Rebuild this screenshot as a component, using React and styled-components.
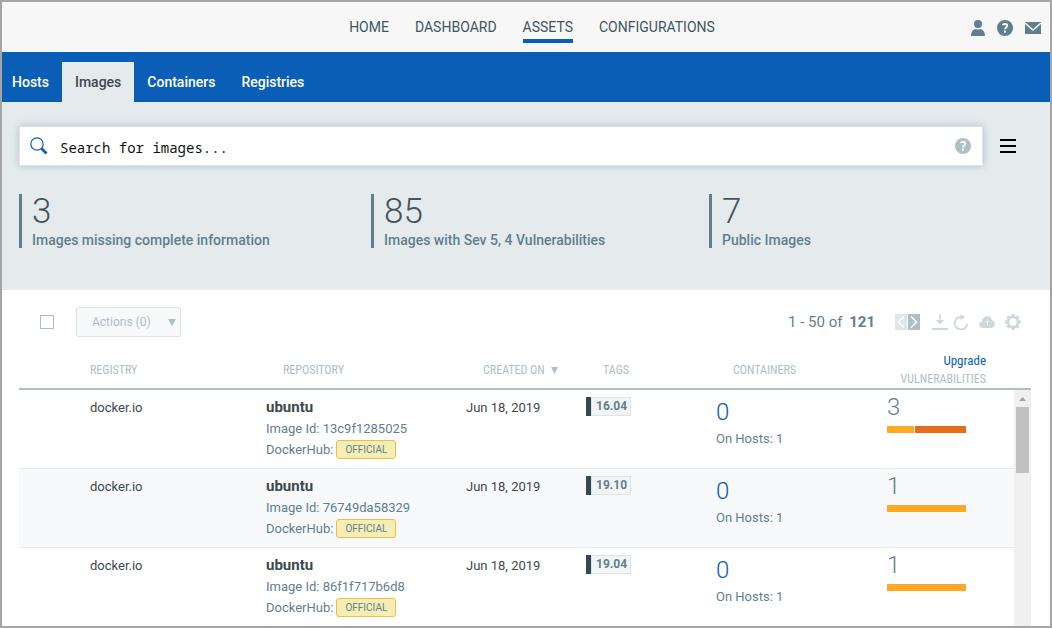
import React, { useState } from "react";
import styled, { createGlobalStyle } from "styled-components";

const GlobalStyle = createGlobalStyle`
  * {
    box-sizing: border-box;
  }
  body {
    margin: 0;
    background: #fff;
    color: #3d484d;
    font-family: Roboto, "Liberation Sans", sans-serif;
    font-size: 13px;
  }
  button {
    font-family: inherit;
    cursor: pointer;
  }
  a {
    text-decoration: none;
  }
`;

const Frame = styled.div`
  display: flex;
  flex-direction: column;
  height: 100vh;
  border: 2px solid #a5a5a5;
  overflow: hidden;
`;

const TopBar = styled.header`
  display: grid;
  grid-template-columns: 1fr auto 1fr;
  flex: none;
  height: 50px;
  padding: 0 9px 0 21px;
  background: #f7f7f7;
`;

const MainNav = styled.nav`
  display: flex;
  grid-column: 2;
  gap: 26px;
  align-items: flex-start;
  padding-top: 17px;
`;

const NavLink = styled.a`
  padding-bottom: 4px;
  border-bottom: 4px solid ${props => (props.$active ? "#0a5eb5" : "transparent")};
  color: #3f5560;
  font-size: 14px;
  line-height: 16px;
`;

const UserTools = styled.div`
  display: flex;
  justify-self: end;
  align-items: center;
  gap: 12px;
  padding-top: 2px;
`;

const IconButton = styled.button`
  display: flex;
  padding: 0;
  border: none;
  background: none;
  color: ${props => props.$color || "#5f7f8f"};
`;

const TabBar = styled.nav`
  display: flex;
  flex: none;
  align-items: flex-end;
  height: 50px;
  background: #0a5eb5;
`;

const Tab = styled.a`
  padding: 0 13px;
  background: ${props => (props.$active ? "#e5ebed" : "transparent")};
  color: ${props => (props.$active ? "#3d484d" : "#fff")};
  font-size: 14px;
  font-weight: 500;
  line-height: 40px;
  &:first-child {
    padding-left: 10px;
  }
`;

const Summary = styled.section`
  flex: none;
  height: 188px;
  padding: 24px 19px 0 17px;
  background: #e5ebed;
`;

const SearchRow = styled.div`
  display: flex;
  align-items: center;
  gap: 17px;
  padding-right: 15px;
`;

const SearchBox = styled.label`
  display: flex;
  flex: 1;
  align-items: center;
  height: 40px;
  padding: 0 11px 0 10px;
  border: 1px solid #dbe4e8;
  background: #fff;
  box-shadow: 0 0 8px #b0bec5;
`;

const SearchInput = styled.input`
  flex: 1;
  min-width: 0;
  margin-left: 12px;
  padding: 4px 0 0;
  border: none;
  outline: none;
  font-family: "Noto Sans Mono", "DejaVu Sans Mono", monospace;
  font-size: 14px;
  line-height: 20px;
  &::placeholder {
    color: #111;
    opacity: 1;
  }
`;

const Stats = styled.div`
  display: grid;
  grid-template-columns: 352fr 338fr 322fr;
  margin-top: 28px;
`;

const Stat = styled.div`
  height: 54px;
  padding-left: 10px;
  border-left: 3px solid #5f7f8f;
`;

const StatValue = styled.div`
  color: #46555d;
  font-size: 35px;
  font-weight: 300;
  line-height: 36px;
`;

const StatLabel = styled.div`
  color: #5f7f8f;
  font-size: 14px;
  font-weight: 500;
  line-height: 20px;
`;

const Toolbar = styled.div`
  display: flex;
  flex: none;
  align-items: center;
  height: 62px;
  padding: 2px 29px 0 38px;
`;

const Checkbox = styled.input`
  appearance: none;
  width: 14px;
  height: 14px;
  margin: 0 22px 0 0;
  border: 1px solid #b0bec5;
  background: #fff;
  &:checked {
    background: #b0bec5;
  }
`;

const ActionsButton = styled.button`
  display: flex;
  align-items: center;
  justify-content: space-between;
  width: 105px;
  height: 30px;
  padding: 0 4px 0 15px;
  border: 1px solid #dde4e8;
  border-radius: 2px;
  background: #f7f9fb;
  color: #b0bec5;
  font-size: 12px;
`;

const Range = styled.div`
  margin-left: auto;
  color: #5f7f8f;
  font-size: 15px;
  b {
    margin-left: 3px;
  }
`;

const Pager = styled.div`
  display: flex;
  gap: 1px;
  margin: 0 12px 0 20px;
`;

const PageButton = styled.button`
  display: flex;
  width: 12px;
  height: 16px;
  padding: 0;
  border: none;
  background: ${props => (props.$dim ? "#dfe6ea" : "#b0bec5")};
`;

const TableTools = styled.div`
  display: flex;
  align-items: center;
  gap: 10px;
`;

const ToolPair = styled.div`
  display: flex;
  gap: 5px;
`;

const ListArea = styled.div`
  display: flex;
  flex: 1;
  min-height: 0;
  margin: 0 19px 0 17px;
  overflow: hidden;
`;

const TableWrap = styled.div`
  flex: 1;
  min-width: 0;
`;

const Table = styled.table`
  width: 100%;
  table-layout: fixed;
  border-collapse: separate;
  border-spacing: 0;
`;

const HeadCell = styled.th`
  height: 38px;
  padding: 0 0 0 ${props => (props.$indent ? "17px" : "0")};
  border-bottom: 2px solid #b0bec5;
  color: #b0bec5;
  font-family: "Liberation Sans Narrow", "Roboto Condensed", "Liberation Sans", sans-serif;
  font-size: 12px;
  font-weight: 400;
  line-height: 18px;
  text-align: left;
  white-space: nowrap;
  a {
    color: #0a5eb5;
    font-size: 13px;
  }
`;

const RightHead = styled.div`
  display: flex;
  flex-direction: column;
  align-items: flex-end;
  padding-right: 28px;
`;

const SortMark = styled.svg`
  margin-left: 6px;
`;

const Row = styled.tr`
  background: #fff;
  &:nth-child(even) {
    background: #f7f9fb;
  }
`;

const Cell = styled.td`
  height: 79px;
  padding: 7px 0 0;
  border-bottom: 1px solid #e5ebed;
  line-height: 21px;
  vertical-align: top;
`;

const RepoName = styled.div`
  font-size: 15px;
  font-weight: 700;
`;

const Muted = styled.div`
  display: flex;
  align-items: center;
  color: #5f7f8f;
`;

const Official = styled.span`
  height: 19px;
  margin-left: 3px;
  padding: 0 8px;
  border: 1px solid #f3bb45;
  border-radius: 3px;
  background: #f5eeb4;
  font-size: 10px;
  line-height: 18px;
`;

const Tag = styled.span`
  display: inline-block;
  height: 19px;
  padding: 0 3px 0 5px;
  border: 1px solid #dbe4e8;
  border-left: 0;
  background: #f3f5f5;
  box-shadow: inset 1px 0 #dbe4e8;
  color: #5f7f8f;
  font-size: 12px;
  font-weight: 700;
  line-height: 17px;
`;

const TagGroup = styled.div`
  display: flex;
  &::before {
    content: "";
    width: 5px;
    height: 19px;
    background: #37474f;
  }
`;

const BigLink = styled.a`
  display: block;
  color: #0a5eb5;
  font-size: 24px;
  font-weight: 300;
  line-height: 31px;
`;

const Count = styled.div`
  margin-bottom: 8px;
  color: #5f7f8f;
  font-size: 24px;
  font-weight: 300;
  line-height: 21px;
`;

const SeverityBar = styled.div`
  display: flex;
  gap: 1px;
  width: 79px;
  height: 7px;
`;

const Severity = styled.span`
  flex: ${props => props.$size};
  background: ${props => (props.$high ? "#e46c1a" : "#ffa726")};
`;

const ScrollSide = styled.div`
  display: flex;
  flex-direction: column;
  width: 17px;
`;

const ScrollCap = styled.div`
  flex: none;
  height: 38px;
  border-bottom: 2px solid #b0bec5;
`;

const ScrollTrack = styled.div`
  display: flex;
  flex: 1;
  flex-direction: column;
  align-items: center;
  background: #f0f0f0;
`;

const ScrollThumb = styled.div`
  width: 13px;
  height: 66px;
  background: #c1c1c1;
`;

const UserIcon = () => (
  <svg width="14" height="16" viewBox="0 0 14 16" fill="currentColor">
    <circle cx="7" cy="4" r="4" />
    <path d="M0 16c0-4 2-6.500 4.500-7 1.500.8 3.500.8 5 0C12 9.500 14 12 14 16z" />
  </svg>
);

const HelpIcon = () => (
  <svg width="16" height="16" viewBox="0 0 16 16">
    <circle cx="8" cy="8" r="8" fill="currentColor" />
    <path d="M5.700 5.200C6 3.600 10.200 3.400 10.200 5.800c0 1.700-2.200 1.700-2.200 3.400" fill="none" stroke="#fff" strokeWidth="1.800" />
    <rect x="7" y="10.600" width="2" height="2" fill="#fff" />
  </svg>
);

const MailIcon = () => (
  <svg width="16" height="12" viewBox="0 0 16 12">
    <path d="M0 0h16v12H0z" fill="currentColor" />
    <path d="M0 1l8 7 8-7" fill="none" stroke="#f7f7f7" strokeWidth="1.600" />
  </svg>
);

const SearchIcon = () => (
  <svg width="18" height="18" viewBox="0 0 18 18" fill="none" stroke="#0a5eb5">
    <circle cx="7" cy="7" r="6.200" strokeWidth="1.200" />
    <path d="M11.500 11.500l5 5" strokeWidth="2.800" />
  </svg>
);

const MenuIcon = () => (
  <svg width="16" height="14" viewBox="0 0 16 14" fill="#000">
    <path d="M0 0h16v2H0zM0 6h16v2H0zM0 12h16v2H0z" />
  </svg>
);

const DownIcon = () => (
  <svg width="8" height="8" viewBox="0 0 8 8" fill="currentColor">
    <path d="M0 1h8L4 8z" />
  </svg>
);

const ChevronIcon = ({ next }) => (
  <svg width="12" height="16" viewBox="0 0 12 16" fill="none" stroke="#fff" strokeWidth="1.500">
    <path d={next ? "M3 2.500l5.500 5.500L3 13.500" : "M9 2.500L3.500 8 9 13.500"} />
  </svg>
);

const DownloadIcon = () => (
  <svg width="16" height="16" viewBox="0 0 16 16" fill="currentColor">
    <path d="M7.200 0h1.600v6H12l-4 4.500L4 6h3.200zM0 14h16v2H0z" />
  </svg>
);

const RefreshIcon = () => (
  <svg width="16" height="16" viewBox="0 0 16 16">
    <path d="M9 3a6.300 6.300 0 1 0 5.200 7" fill="none" stroke="currentColor" strokeWidth="2" />
    <path d="M7.500 0L12 3.200 7.500 6z" fill="currentColor" />
  </svg>
);

const CloudIcon = () => (
  <svg width="16" height="12" viewBox="0 0 16 12">
    <path d="M4 12C-1 12-1 6 3 5.200 3.200 2 6-.300 9 .2c2.400.4 3.700 2 4 4 4 .7 4 7.400-.5 7.800z" fill="currentColor" />
    <path d="M8.500 4.500l1.500 2H9V9H8V6.500H7z" fill="#fff" />
  </svg>
);

const teeth = [0, 45, 90, 135, 180, 225, 270, 315];

const GearIcon = () => (
  <svg width="16" height="16" viewBox="0 0 16 16">
    <circle cx="8" cy="8" r="5" fill="none" stroke="currentColor" strokeWidth="2.600" />
    {teeth.map(angle => (
      <rect key={angle} x="6.400" y="0" width="3.200" height="3" fill="currentColor" transform={`rotate(${angle} 8 8)`} />
    ))}
  </svg>
);

const navItems = ["HOME", "DASHBOARD", "ASSETS", "CONFIGURATIONS"];
const tabs = ["Hosts", "Images", "Containers", "Registries"];
const columns = [71, 176, 200, 120, 130, 171, 127];

const stats = [
  { value: 3, label: "Images missing complete information" },
  { value: 85, label: "Images with Sev 5, 4 Vulnerabilities" },
  { value: 7, label: "Public Images" }
];

const images = [
  { id: "13c9f1285025", tag: "16.04", vulns: 3, bars: [{ size: 27 }, { size: 51, high: true }] },
  { id: "76749da58329", tag: "19.10", vulns: 1, bars: [{ size: 1 }] },
  { id: "86f1f717b6d8", tag: "19.04", vulns: 1, bars: [{ size: 1 }] }
];

function ImageRow({ image }) {
  return (
    <Row>
      <Cell />
      <Cell>docker.io</Cell>
      <Cell>
        <RepoName>ubuntu</RepoName>
        <Muted>Image Id: {image.id}</Muted>
        <Muted>
          DockerHub: <Official>OFFICIAL</Official>
        </Muted>
      </Cell>
      <Cell>Jun 18, 2019</Cell>
      <Cell>
        <TagGroup>
          <Tag>{image.tag}</Tag>
        </TagGroup>
      </Cell>
      <Cell>
        <BigLink href="#">0</BigLink>
        <Muted>On Hosts: 1</Muted>
      </Cell>
      <Cell>
        <Count>{image.vulns}</Count>
        <SeverityBar>
          {image.bars.map(bar => (
            <Severity key={bar.size} $size={bar.size} $high={bar.high} />
          ))}
        </SeverityBar>
      </Cell>
    </Row>
  );
}

function App() {
  const [query, setQuery] = useState("");

  return (
    <>
      <GlobalStyle />
      <Frame>
        <TopBar>
          <MainNav>
            {navItems.map(item => (
              <NavLink key={item} href="#" $active={item === "ASSETS"}>{item}</NavLink>
            ))}
          </MainNav>
          <UserTools>
            <IconButton aria-label="Account"><UserIcon /></IconButton>
            <IconButton aria-label="Help"><HelpIcon /></IconButton>
            <IconButton aria-label="Messages"><MailIcon /></IconButton>
          </UserTools>
        </TopBar>
        <TabBar>
          {tabs.map(tab => (
            <Tab key={tab} href="#" $active={tab === "Images"}>{tab}</Tab>
          ))}
        </TabBar>
        <Summary>
          <SearchRow>
            <SearchBox>
              <SearchIcon />
              <SearchInput
                aria-label="Search for images"
                placeholder="Search for images..."
                value={query}
                onChange={e => setQuery(e.target.value)}
              />
              <IconButton $color="#b0bec5" aria-label="Search help"><HelpIcon /></IconButton>
            </SearchBox>
            <IconButton aria-label="Menu"><MenuIcon /></IconButton>
          </SearchRow>
          <Stats>
            {stats.map(stat => (
              <Stat key={stat.label}>
                <StatValue>{stat.value}</StatValue>
                <StatLabel>{stat.label}</StatLabel>
              </Stat>
            ))}
          </Stats>
        </Summary>
        <Toolbar>
          <Checkbox type="checkbox" aria-label="Select all" />
          <ActionsButton aria-haspopup="menu">
            Actions (0) <DownIcon />
          </ActionsButton>
          <Range>1 - 50 of <b>121</b></Range>
          <Pager>
            <PageButton $dim aria-label="Previous page"><ChevronIcon /></PageButton>
            <PageButton aria-label="Next page"><ChevronIcon next /></PageButton>
          </Pager>
          <TableTools>
            <ToolPair>
              <IconButton $color="#cfd8dc" aria-label="Download"><DownloadIcon /></IconButton>
              <IconButton $color="#cfd8dc" aria-label="Refresh"><RefreshIcon /></IconButton>
            </ToolPair>
            <IconButton $color="#cfd8dc" aria-label="Upload"><CloudIcon /></IconButton>
            <IconButton $color="#cfd8dc" aria-label="Settings"><GearIcon /></IconButton>
          </TableTools>
        </Toolbar>
        <ListArea>
          <TableWrap>
            <Table>
              <colgroup>
                {columns.map((width, i) => (
                  <col key={i} width={width} />
                ))}
              </colgroup>
              <thead>
                <tr>
                  <HeadCell />
                  <HeadCell>REGISTRY</HeadCell>
                  <HeadCell $indent>REPOSITORY</HeadCell>
                  <HeadCell $indent>
                    CREATED ON
                    <SortMark width="7" height="7" viewBox="0 0 8 8" fill="currentColor">
                      <path d="M0 0h8L4 8z" />
                    </SortMark>
                  </HeadCell>
                  <HeadCell $indent>TAGS</HeadCell>
                  <HeadCell $indent>CONTAINERS</HeadCell>
                  <HeadCell>
                    <RightHead>
                      <a href="#">Upgrade</a>
                      <span>VULNERABILITIES</span>
                    </RightHead>
                  </HeadCell>
                </tr>
              </thead>
              <tbody>
                {images.map(image => (
                  <ImageRow key={image.id} image={image} />
                ))}
              </tbody>
            </Table>
          </TableWrap>
          <ScrollSide>
            <ScrollCap />
            <ScrollTrack>
              <svg width="17" height="17" viewBox="0 0 17 17" fill="#a3a3a3">
                <path d="M5 11h7L8.500 7z" />
              </svg>
              <ScrollThumb />
            </ScrollTrack>
          </ScrollSide>
        </ListArea>
      </Frame>
    </>
  );
}

export default App;
